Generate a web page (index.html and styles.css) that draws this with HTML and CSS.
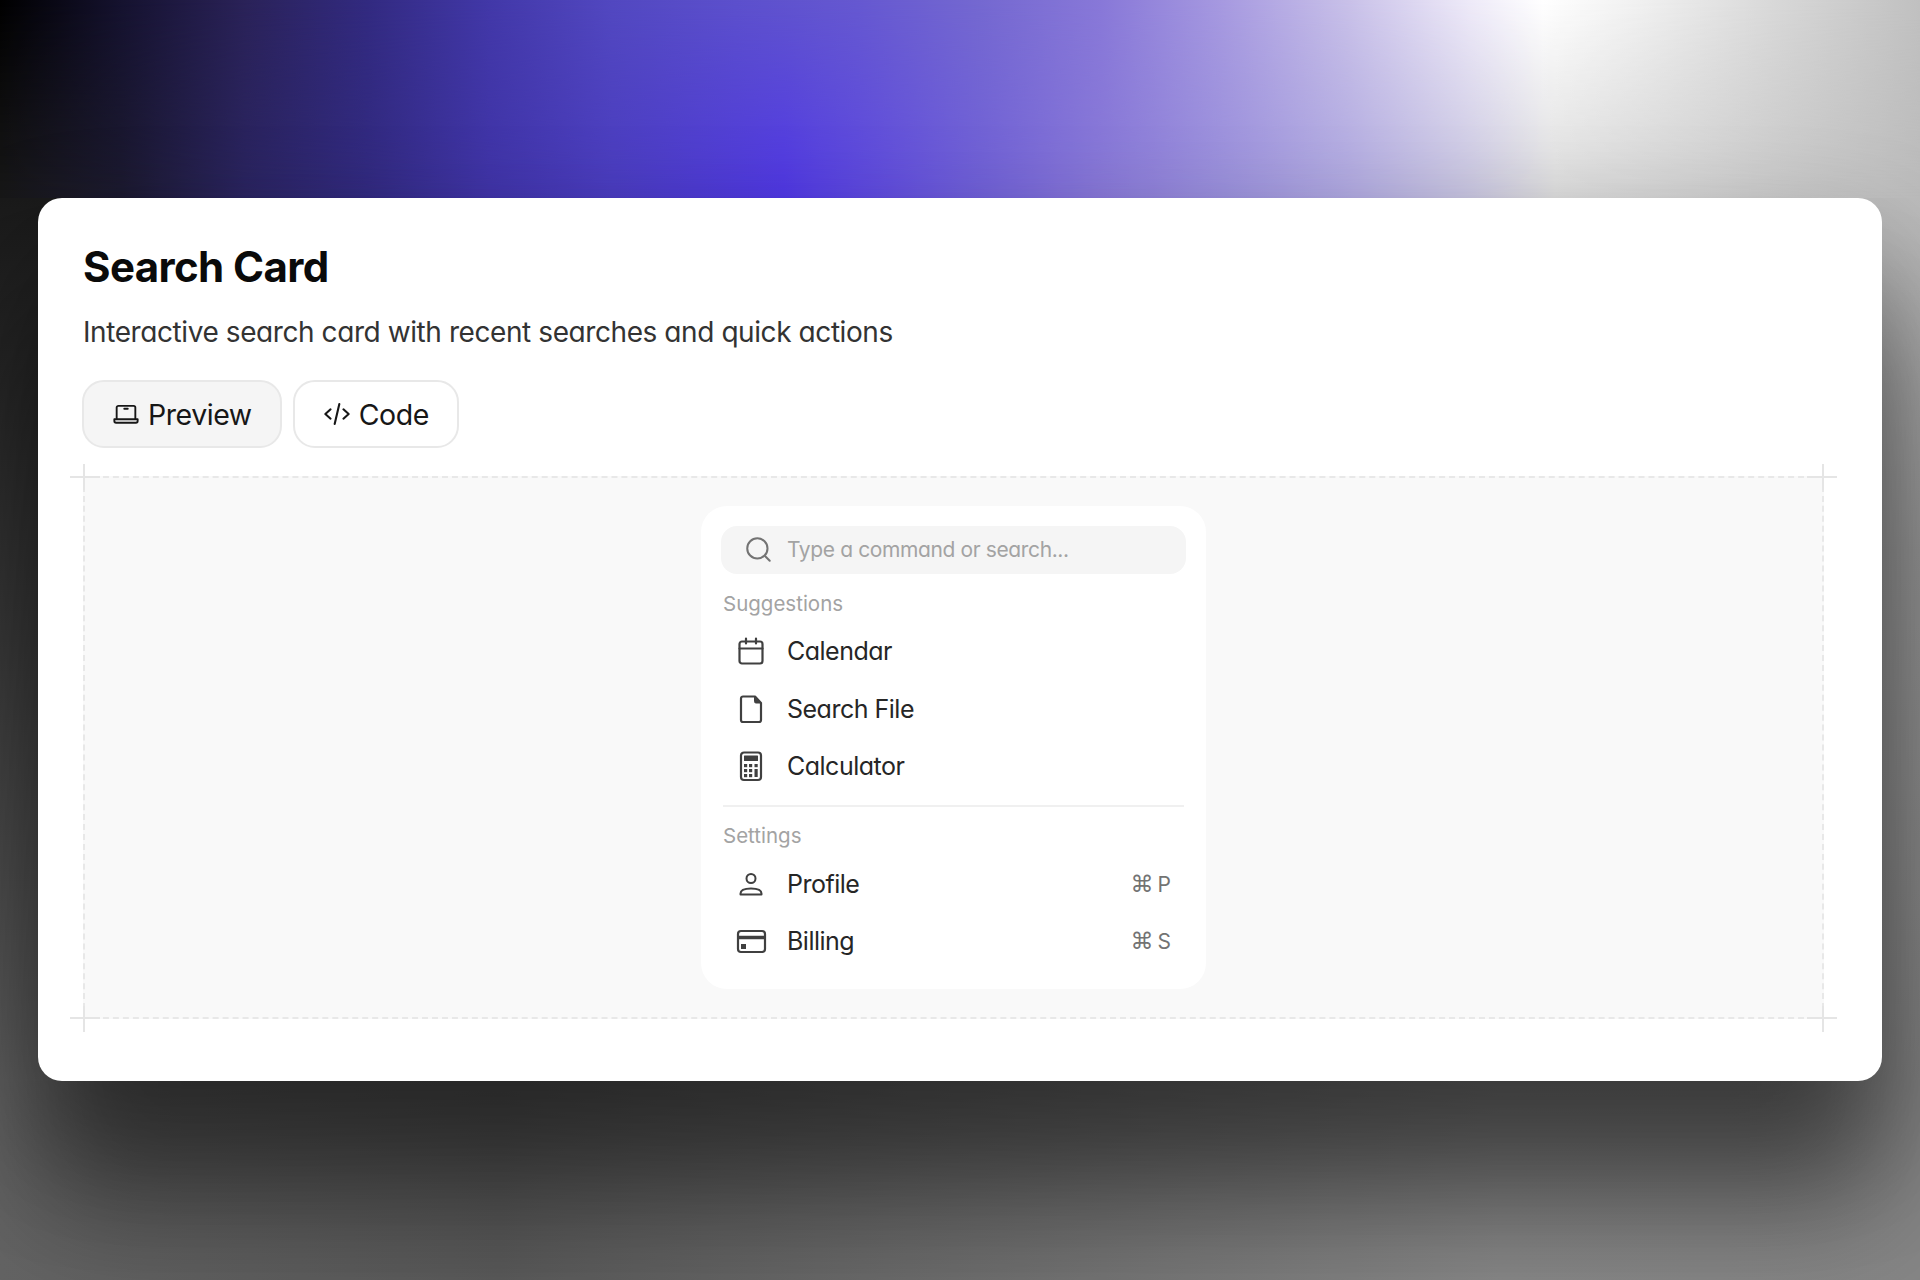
FILE: index.html
```html
<!DOCTYPE html>
<html>
<head>
    <title>Search Card</title>
    <link rel="stylesheet" href="styles.css">
</head>
<body>
    <div class="card">
        <h1>Search Card</h1>
        <p class="subtitle">Interactive search card with recent searches and quick actions</p>

        <div class="tabs">
            <button class="tab active">
                <svg class="tab-icon" viewBox="0 0 24 24" fill="none" stroke="currentColor" stroke-width="1.6" stroke-linejoin="round">
                    <path d="M4 16.500V6.500a1.500 1.500 0 0 1 1.500-1.500h13A1.500 1.500 0 0 1 20 6.500v10"/>
                    <path d="M2 16.500h20v1.500a1.500 1.500 0 0 1-1.500 1.500h-17A1.500 1.500 0 0 1 2 18z"/>
                    <path d="M10.500 7.500h3" stroke-linecap="round"/>
                </svg>
                Preview
            </button>
            <button class="tab">
                <svg class="tab-icon" viewBox="0 0 24 24" fill="none" stroke="currentColor" stroke-width="1.8" stroke-linecap="round" stroke-linejoin="round">
                    <path d="M6.500 8 2 12l4.500 4"/>
                    <path d="m17.500 8 4.500 4-4.500 4"/>
                    <path d="M14 3.500 10 20.500"/>
                </svg>
                Code
            </button>
        </div>

        <div class="preview">
            <span class="tick tick-h tick-top"></span>
            <span class="tick tick-h tick-bottom"></span>
            <span class="tick tick-v tick-left"></span>
            <span class="tick tick-v tick-right"></span>

            <div class="search-card">
                <div class="search-input">
                    <svg class="search-icon" viewBox="0 0 24 24" fill="none" stroke="currentColor" stroke-width="1.8" stroke-linecap="round">
                        <circle cx="11" cy="11" r="9"/>
                        <path d="m18 18 4 4"/>
                    </svg>
                    <span>Type a command or search...</span>
                </div>

                <div class="group-label">Suggestions</div>
                <div class="item">
                    <svg class="item-icon" viewBox="0 0 28 28" fill="none" stroke="currentColor" stroke-width="2.200" stroke-linecap="round" stroke-linejoin="round">
                        <rect x="2.500" y="4.500" width="23" height="22" rx="2.500"/>
                        <path d="M2.500 11.500h23M9 1.500v5M19 1.500v5"/>
                    </svg>
                    <span>Calendar</span>
                </div>
                <div class="item">
                    <svg class="item-icon" viewBox="0 0 28 28" fill="none" stroke="currentColor" stroke-width="2.200" stroke-linejoin="round">
                        <path d="M6 1.500h12l6 6.500v17a2 2 0 0 1-2 2h-16a2 2 0 0 1-2-2v-21.500a2 2 0 0 1 2-2z"/>
                        <path d="M17.500 2v4.500a1.500 1.500 0 0 0 1.500 1.500h4.500z" fill="currentColor" stroke-width="1"/>
                    </svg>
                    <span>Search File</span>
                </div>
                <div class="item">
                    <svg class="item-icon" viewBox="0 0 28 28" fill="none" stroke="currentColor" stroke-width="2.200">
                        <rect x="4" y="0.500" width="20" height="27.500" rx="3"/>
                        <rect x="7" y="3.500" width="14" height="5.500" rx="0.500" fill="currentColor" stroke="none"/>
                        <g fill="currentColor" stroke="none">
                            <rect x="7" y="12" width="3.200" height="3.200"/>
                            <rect x="12" y="12" width="3.200" height="3.200"/>
                            <rect x="17.500" y="12" width="3.200" height="3.200"/>
                            <rect x="7" y="17" width="3.200" height="3.200"/>
                            <rect x="12" y="17" width="3.200" height="3.200"/>
                            <rect x="17.500" y="17" width="3.200" height="8"/>
                            <rect x="7" y="22" width="3.200" height="3.200"/>
                            <rect x="12" y="22" width="3.200" height="3.200"/>
                        </g>
                    </svg>
                    <span>Calculator</span>
                </div>

                <div class="divider"></div>

                <div class="group-label">Settings</div>
                <div class="item">
                    <svg class="item-icon" viewBox="0 0 28 28" fill="none" stroke="currentColor" stroke-width="2" stroke-linejoin="round">
                        <circle cx="14" cy="8.500" r="4.500"/>
                        <path d="M3.500 24.500v-1c0-3 3.500-5 10.500-5s10.500 2 10.500 5v1z"/>
                    </svg>
                    <span>Profile</span>
                    <span class="shortcut"><span class="cmd">⌘</span>P</span>
                </div>
                <div class="item">
                    <svg class="item-icon" viewBox="0 0 28 28" fill="none" stroke="currentColor" stroke-width="2.200">
                        <rect x="1" y="4" width="27" height="21" rx="3"/>
                        <path d="M1 10.500h27" stroke-width="3.500"/>
                        <rect x="4" y="17" width="5" height="5" fill="currentColor" stroke="none"/>
                    </svg>
                    <span>Billing</span>
                    <span class="shortcut"><span class="cmd">⌘</span>S</span>
                </div>
            </div>
        </div>
    </div>
</body>
</html>
```

FILE: styles.css
```css
* {
    box-sizing: border-box;
}
html, body {
    height: 100%;
}
body {
    position: relative;
    margin: 0;
    padding: 198px 38px 0;
    font-family: Inter, "Liberation Sans", sans-serif;
    font-feature-settings: "cv11";
    color: #262626;
    overflow: hidden;
    background-color: #6a6a6a;
    background-image:
        linear-gradient(to right, #181818 0, #1c1a30 122px, #2a2460 245px, #322a80 367px, #4034a8 490px, #4a3cc0 612px, #5038e5 784px, #7060d8 980px, #8878d8 1102px, #9a90dc 1225px, #afa8e0 1347px, #c8c5e0 1470px, #ddd 1555px, #d0d0d0 1714px, #bcbcbc 1920px),
        linear-gradient(to bottom, #1a1a1a 0, #3c3c3c 50%, #646464 100%),
        linear-gradient(to bottom, #bcbcbc 0, #b0b0b0 15%, #9c9c9c 40%, #868686 100%),
        linear-gradient(to right, #646464 0, #5a5a5a 500px, #707070 1000px, #888 1500px, #868686 1920px);
    background-repeat: no-repeat;
    background-size: 100% 198px, 70px 883px, 70px 883px, 100% 100%;
    background-position: 0 0, 0 198px, 100% 198px, 0 0;
}
/* colours of the very top row, fading out into the row just above the card */
body::before {
    content: "";
    position: absolute;
    top: 0;
    left: 0;
    right: 0;
    height: 198px;
    background: linear-gradient(to right, #000 0, #15122f 122px, #2a2258 245px, #322a80 367px, #4238a8 490px, #5248c0 612px, #5c50cc 735px, #6558d0 857px, #7468d0 980px, #8878d8 1102px, #a79ae0 1225px, #c8c0e8 1347px, #eeeaf8 1470px, #fff 1543px, #eee 1653px, #d8d8d8 1775px, #c0c0c0 1920px);
    -webkit-mask-image: linear-gradient(to bottom, #000, transparent);
    mask-image: linear-gradient(to bottom, #000, transparent);
}
.card {
    position: relative;
    height: 883px;
    background: white;
    border-radius: 24px;
    padding: 44px 46px 0 45px;
    box-shadow: 0 60px 120px rgba(0,0,0,0.36), 0 130px 120px rgba(0,0,0,0.36);
}
h1 {
    margin: 0;
    font-size: 42px;
    line-height: 50px;
    font-weight: 700;
    letter-spacing: -0.6px;
    color: #0a0a0a;
    font-feature-settings: normal;
}
.subtitle {
    margin: 22px 0 0;
    font-size: 28px;
    line-height: 36px;
    letter-spacing: -0.42px;
    color: #333;
}
.tabs {
    display: flex;
    gap: 11px;
    margin: 30px 0 0 -1px;
}
.tab {
    display: flex;
    align-items: center;
    gap: 8px;
    height: 68px;
    padding: 0 28px;
    border: 2px solid #e8e8e8;
    border-radius: 22px;
    background: white;
    font: 400 28.500px Inter, "Liberation Sans", sans-serif;
    font-feature-settings: "cv11";
    letter-spacing: -0.45px;
    color: #171717;
}
.tab.active {
    background: #f5f5f5;
}
.tab-icon {
    width: 28px;
    height: 28px;
}
.preview {
    position: relative;
    display: flex;
    justify-content: center;
    height: 543px;
    width: 1741px;
    margin-top: 28px;
    padding-top: 28px;
    background: #f9f9f9;
    border: 2px dashed #e8e8e8;
}
.tick {
    position: absolute;
    background: #e5e5e5;
}
.tick-h {
    left: -15px;
    right: -15px;
    height: 2px;
    background: linear-gradient(to right, #e5e5e5 30px, transparent 30px, transparent calc(100% - 30px), #e5e5e5 calc(100% - 30px));
}
.tick-top { top: -2px; }
.tick-bottom { bottom: -2px; }
.tick-v {
    top: -14px;
    bottom: -15px;
    width: 2px;
    background: linear-gradient(to bottom, #e5e5e5 26px, transparent 26px, transparent calc(100% - 26px), #e5e5e5 calc(100% - 26px));
}
.tick-left { left: -2px; }
.tick-right { right: -2px; }
.search-card {
    width: 505px;
    height: 483px;
    padding: 20px 20px 0;
    background: white;
    border-radius: 26px;
}
.search-input {
    display: flex;
    align-items: center;
    height: 48px;
    padding: 0 0 2px 24px;
    background: #f5f5f5;
    border-radius: 16px;
    font-size: 21px;
    letter-spacing: -0.38px;
    color: #a3a3a3;
}
.search-icon {
    width: 27px;
    height: 27px;
    margin-right: 15px;
    color: #737373;
}
.group-label {
    padding-left: 2px;
    margin-bottom: 6.500px;
    font-size: 20.500px;
    line-height: 24px;
    color: #a3a3a3;
}
.search-input + .group-label {
    margin-top: 18px;
}
.item {
    display: flex;
    align-items: center;
    height: 57.600px;
    padding: 0 15px 0 16px;
    font-size: 25px;
    letter-spacing: -0.5px;
    color: #262626;
}
.item-icon {
    flex: none;
    width: 28px;
    height: 28px;
    margin-right: 22px;
    color: #404040;
    overflow: visible;
}
.shortcut {
    margin-left: auto;
    font-size: 21px;
    letter-spacing: 0;
    color: #737373;
}
.cmd {
    font-family: "DejaVu Sans", sans-serif;
    font-size: 23px;
    margin-right: 4px;
}
.divider {
    height: 2px;
    margin: 10px 2px 17px;
    background: #f0f0f0;
}
```
